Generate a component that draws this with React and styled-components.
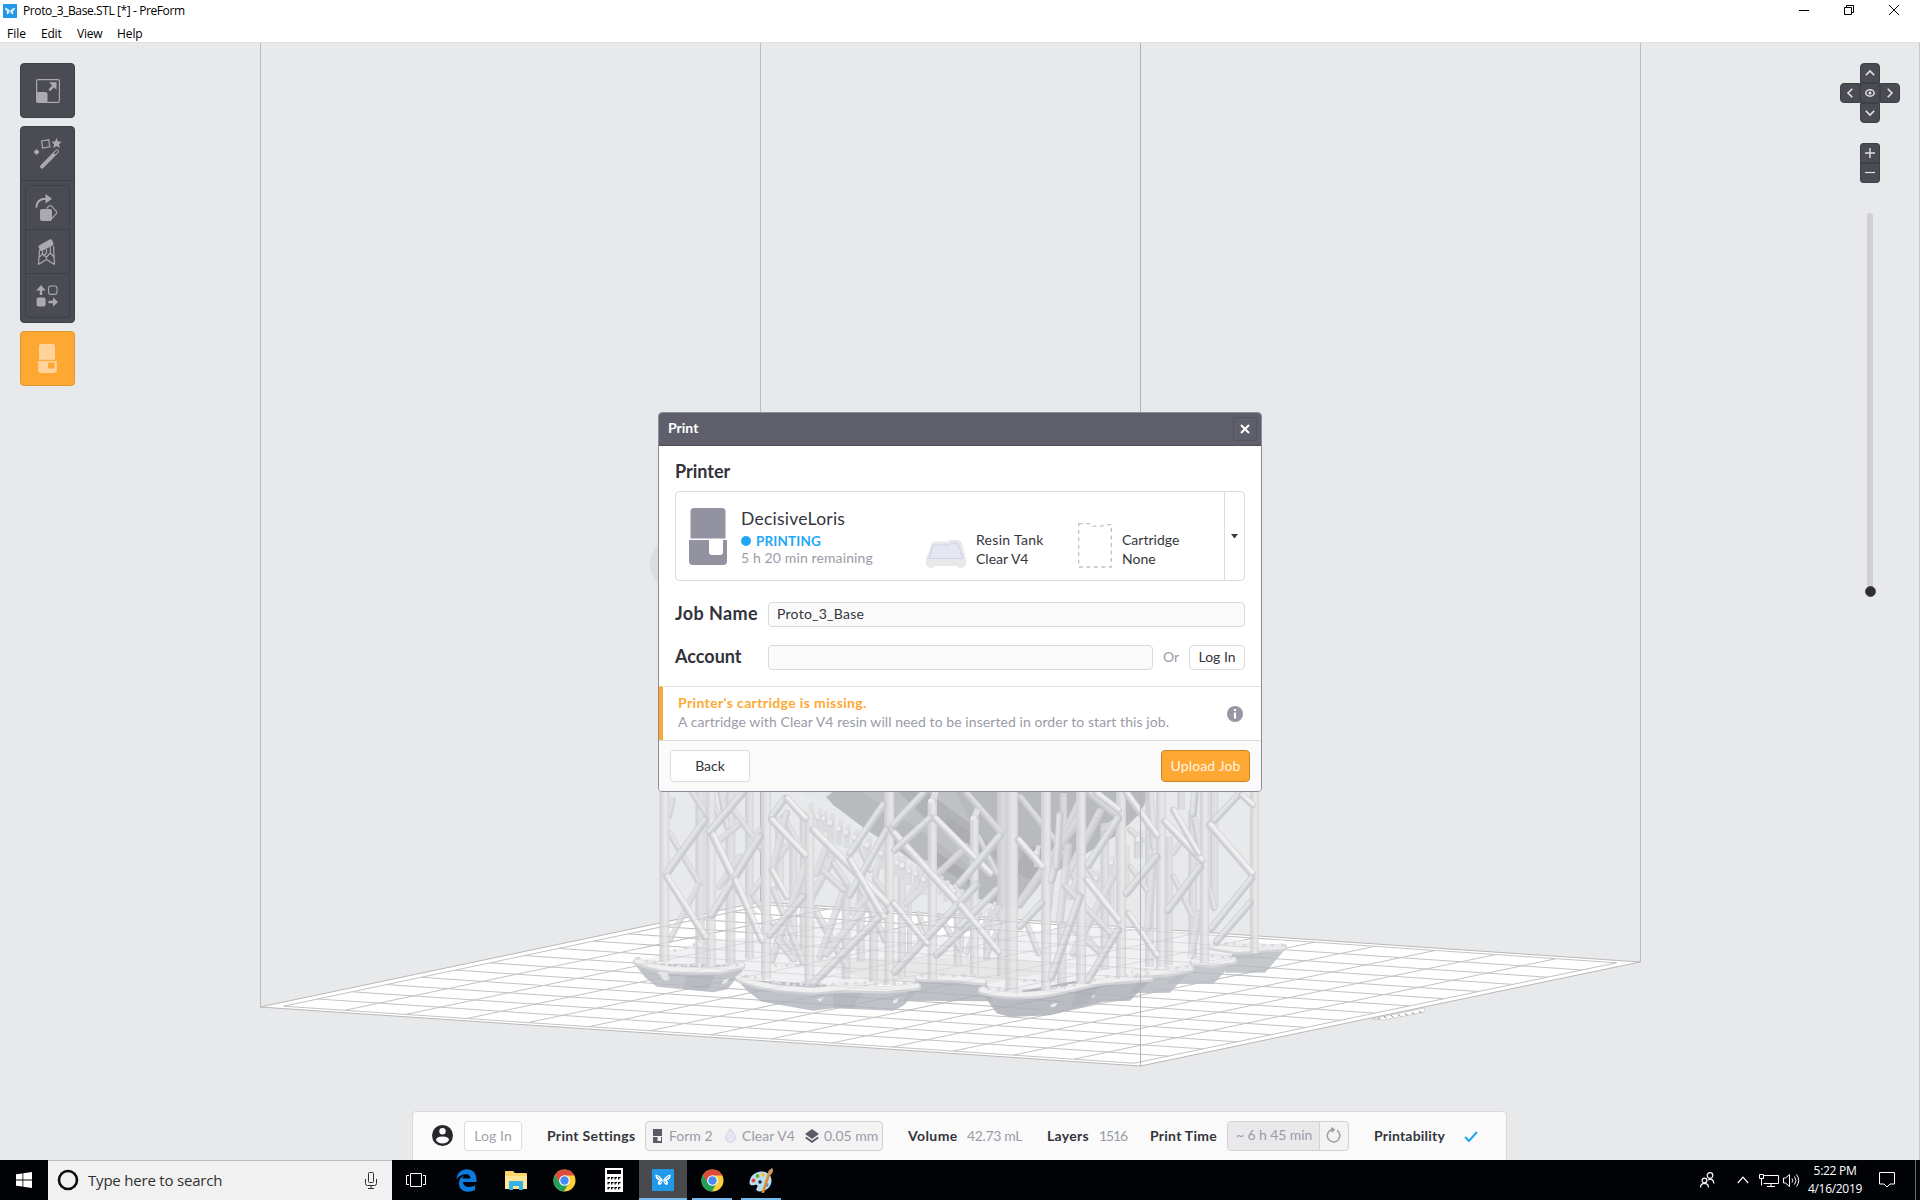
import React from "react";
import styled, { createGlobalStyle, css } from "styled-components";

const Global = createGlobalStyle`
  * { box-sizing: border-box; }
  html, body { margin: 0; padding: 0; overflow: hidden; }
  svg { display: block; flex: none; }
  button { font: inherit; margin: 0; padding: 0; }
`;

const UI = `Lato, "Open Sans", sans-serif`;
const SYS = `"Open Sans", "Noto Sans", sans-serif`;

/* ---------- window frame ---------- */

const Screen = styled.div`
  width: 1920px;
  height: 1200px;
  display: grid;
  grid-template-rows: 22px 20px 1118px 40px;
  background: #fff;
  font-family: ${UI};
  font-size: 14px;
  color: #35353d;
`;
const TitleBar = styled.header`
  display: flex;
  align-items: center;
  padding: 0 21px 0 3px;
  color: #000;
  font: 12px/22px ${SYS};
`;
const Title = styled.span`
  margin-left: 6px;
  letter-spacing: ${(p) => p.$ls || 0}px;
  flex: 1;
`;
const WinControls = styled.div`
  display: flex;
  gap: 35px;
  margin-top: -2px;
`;
const MenuBar = styled.nav`
  display: flex;
  padding-left: 7px;
  color: #000;
  font: 12px/23px ${SYS};
`;
const MenuItem = styled.span`
  width: ${(p) => p.$w}px;
  letter-spacing: ${(p) => p.$ls || 0}px;
`;
const Viewport = styled.main`
  position: relative;
  background: #e8e9eb;
  border-top: 1px solid #dfe0e2;
  border-right: 1px solid #c9cacc;
  overflow: hidden;
`;
const SceneSvg = styled.svg`
  position: absolute;
  left: 0;
  top: -43px;
`;

/* ---------- side tools ---------- */

const ToolColumn = styled.aside`
  position: absolute;
  left: 20px;
  top: 20px;
  display: flex;
  flex-direction: column;
  gap: 8px;
`;
const Tool = styled.button`
  width: 55px;
  height: 55px;
  border-radius: 4px;
  border: 1px solid ${(p) => (p.$hot ? "#e0952f" : "#3f3f48")};
  background: ${(p) => (p.$hot ? "#fea834" : "#4b4b54")};
  display: grid;
  place-items: center;
`;
const ToolGroup = styled.div`
  width: 55px;
  height: 197px;
  border-radius: 4px;
  border: 1px solid #3f3f48;
  background: #4b4b54;
`;
const GroupHead = styled.div`
  height: 54px;
  border-bottom: 1px solid #3e3e47;
  display: grid;
  place-items: center;
`;
const SubTools = styled.div`
  margin: 4px 4px 0;
  height: 133px;
  border: 1px solid #3f3f48;
  border-radius: 4px;
  display: grid;
  grid-template-rows: 44px 44px 43px;
`;
const SubTool = styled.div`
  display: grid;
  place-items: center;
  padding-right: 2px;
  border-bottom: ${(p) => (p.$last ? "none" : "1px solid #3f3f48")};
`;

/* ---------- view controls ---------- */

const ViewColumn = styled.aside`
  position: absolute;
  right: 19px;
  top: 20px;
  width: 60px;
  display: flex;
  flex-direction: column;
  align-items: center;
`;
const Pad = styled.div`
  display: grid;
  grid-template-columns: repeat(3, 20px);
  grid-template-rows: repeat(3, 20px);
`;
const PadKey = styled.div`
  grid-area: ${(p) => p.$area};
  background: #4b4b54;
  border: 1px solid #3f3f48;
  border-radius: ${(p) => p.$r || "0"};
  display: grid;
  place-items: center;
`;
const ZoomKeys = styled.div`
  margin-top: 20px;
  width: 20px;
  height: 40px;
  border-radius: 3px;
  border: 1px solid #3f3f48;
  background: linear-gradient(#4b4b54 18px, #3f3f48 18px, #3f3f48 20px, #4b4b54 20px);
  display: grid;
  grid-template-rows: 18px 20px;
  place-items: center;
`;
const SliderTrack = styled.div`
  margin-top: 30px;
  width: 6px;
  height: 384px;
  border-radius: 3px;
  background: #d0d0d2;
  display: flex;
  align-items: flex-end;
  justify-content: center;
`;
const Knob = styled.div`
  flex: none;
  width: 11px;
  height: 11px;
  border-radius: 50%;
  background: #2c2c31;
  border: 1px solid #4b4b54;
`;

/* ---------- dialog ---------- */

const Dialog = styled.section`
  position: absolute;
  left: 658px;
  top: 369px;
  width: 604px;
  height: 380px;
  border: 1px solid #8d8d99;
  border-radius: 4px;
  background: #fff;
  overflow: hidden;
  display: flex;
  flex-direction: column;
`;
const DialogHead = styled.div`
  height: 33px;
  flex: none;
  background: #5f5f6b;
  border-bottom: 1px solid #50505c;
  color: #fff;
  font-weight: 700;
  font-size: 14px;
  display: flex;
  align-items: center;
  justify-content: space-between;
  padding: 0 4px 3px 9px;
`;
const CloseBtn = styled.div`
  width: 24px;
  height: 24px;
  margin-top: 2px;
  border: 1px solid #53535f;
  border-radius: 3px;
  display: grid;
  place-items: center;
`;
const Body = styled.div`
  height: 240px;
  padding: 0 16px;
  display: flex;
  flex-direction: column;
`;
const Heading = styled.div`
  font-size: 18px;
  font-weight: 700;
  line-height: 24px;
  color: #32323a;
  white-space: nowrap;
  letter-spacing: ${(p) => p.$ls || 0}px;
  width: ${(p) => (p.$w ? p.$w + "px" : "auto")};
  margin-top: ${(p) => p.$mt || 0}px;
`;
const PrinterCard = styled.div`
  margin-top: 8px;
  height: 90px;
  flex: none;
  border: 1px solid #dcdcde;
  border-radius: 4px;
  display: flex;
`;
const PrinterInfo = styled.div`
  width: 186px;
  padding: 15px 0 0 14px;
`;
const PrinterName = styled.div`
  font-size: 17.5px;
  line-height: 24px;
  letter-spacing: ${(p) => p.$ls || 0}px;
`;
const State = styled.div`
  display: flex;
  align-items: center;
  gap: 5px;
  height: 20px;
  color: #22a7f5;
  font-weight: 700;
  font-size: 13.5px;
  letter-spacing: 0.15px;
  &::before {
    content: "";
    width: 10px;
    height: 10px;
    border-radius: 50%;
    background: #22a7f5;
  }
`;
const Muted = styled.div`
  color: #9b9ba7;
  white-space: nowrap;
  font-size: 14px;
  line-height: ${(p) => p.$lh || 16}px;
  letter-spacing: ${(p) => p.$ls || 0}px;
`;
const Part = styled.div`
  width: ${(p) => p.$w}px;
  padding-top: ${(p) => p.$pt}px;
`;
const PartText = styled.div`
  width: ${(p) => p.$w}px;
  padding-top: 38px;
  line-height: 19px;
  font-size: 14px;
  white-space: nowrap;
`;
const Line = styled.div`
  letter-spacing: ${(p) => p.$ls || 0}px;
`;
const Drop = styled.div`
  margin-left: auto;
  width: 20px;
  border-left: 1px solid #dcdcde;
  display: grid;
  place-items: center;
`;
const Row = styled.div`
  display: flex;
  align-items: center;
  height: 24px;
  margin-top: ${(p) => p.$mt}px;
`;
const Field = styled.div`
  width: ${(p) => p.$w}px;
  height: 25px;
  border: 1px solid #dadadc;
  border-radius: 4px;
  background: #fafafa;
  padding-left: 8px;
  line-height: 22px;
  letter-spacing: ${(p) => p.$ls || 0}px;
`;
const Or = styled.span`
  width: 36px;
  text-align: center;
  color: #9b9ba7;
  margin-top: -2px;
`;
const Button = styled.div`
  width: ${(p) => p.$w}px;
  height: ${(p) => p.$h}px;
  border-radius: 4px;
  border: 1px solid #dcdcde;
  background: #fff;
  display: grid;
  place-items: center;
  padding-bottom: 2px;
  white-space: nowrap;
  letter-spacing: ${(p) => p.$ls || 0}px;
  ${(p) => p.$muted && css`color: #a3a3ad;`}
  ${(p) =>
    p.$primary &&
    css`
      background: #fea834;
      border-color: #c98427;
      color: #fff3e0;
    `}
`;
const Warning = styled.div`
  height: 54px;
  flex: none;
  border-top: 1px solid #e3e3e5;
  border-left: 4px solid #fea834;
  padding: 0 18px 0 15px;
  display: flex;
  align-items: center;
  justify-content: space-between;
`;
const WarnText = styled.div`
  padding-bottom: 3px;
`;
const WarnTitle = styled.div`
  color: #fea834;
  font-weight: 700;
  line-height: 19px;
  letter-spacing: ${(p) => p.$ls || 0}px;
`;
const Foot = styled.div`
  flex: 1;
  background: #fafafa;
  border-top: 1px solid #dadadc;
  display: flex;
  align-items: center;
  justify-content: space-between;
  padding: 0 11px;
`;

/* ---------- status bar ---------- */

const Status = styled.div`
  position: absolute;
  left: 412px;
  bottom: 0;
  width: 1095px;
  height: 49px;
  border: 1px solid #dadadc;
  border-bottom: 0;
  border-radius: 4px 4px 0 0;
  background: #fafafa;
  display: flex;
  align-items: center;
  padding-left: 19px;
`;
const Cell = styled.span`
  width: ${(p) => p.$w}px;
  flex: none;
  white-space: nowrap;
  margin-top: -2px;
  font-weight: ${(p) => (p.$b ? 700 : 400)};
  color: ${(p) => (p.$b ? "#35353d" : "#9b9ba7")};
  letter-spacing: ${(p) => p.$ls || 0}px;
`;
const Group = styled.div`
  width: ${(p) => p.$w}px;
  margin-right: ${(p) => p.$mr}px;
  height: 30px;
  flex: none;
  border: 1px solid #d2d2d4;
  border-radius: 4px;
  background: #f3f3f4;
  display: flex;
  align-items: center;
  padding-left: ${(p) => p.$pl || 0}px;
  overflow: hidden;
`;
const Glyph = styled.div`
  width: ${(p) => p.$w}px;
  flex: none;
  margin-top: -1px;
`;
const TimeCell = styled.div`
  width: 93px;
  height: 28px;
  line-height: 26px;
  padding-left: 8px;
  background: #e9e9eb;
  border-right: 1px solid #d2d2d4;
  color: #9b9ba7;
  white-space: nowrap;
  letter-spacing: ${(p) => p.$ls || 0}px;
`;

/* ---------- taskbar ---------- */

const Taskbar = styled.footer`
  background: #010307;
  display: flex;
  font-family: ${SYS};
  color: #fff;
`;
const Start = styled.div`
  width: 48px;
  display: grid;
  place-items: center;
`;
const Search = styled.div`
  width: 344px;
  background: #f1f1f1;
  border-top: 1px solid #bdbdbd;
  display: flex;
  align-items: center;
  padding: 0 15px 1px 9px;
  color: #303030;
  font-size: 15px;
`;
const SearchText = styled.span`
  margin: -1px 0 0 9px;
  flex: 1;
  letter-spacing: ${(p) => p.$ls || 0}px;
`;
const TaskApp = styled.div`
  width: ${(p) => p.$w || 49}px;
  display: grid;
  place-items: center;
  background: ${(p) => (p.$active ? "#47494d" : "none")};
  box-shadow: ${(p) => (p.$active ? "inset 0 -2px #76b9ed" : "none")};
`;
const Running = styled.div`
  width: 40px;
  height: 40px;
  margin: 0 4px 0 5px;
  display: grid;
  place-items: center;
  box-shadow: inset 0 -2px #76b9ed;
`;
const Tray = styled.div`
  margin-left: auto;
  display: flex;
  align-items: center;
  border-right: 1px solid #6c6d70;
  margin-right: 4px;
  padding-right: 20px;
`;
const Clock = styled.div`
  width: 62px;
  margin: -1px 13px 0 3px;
  text-align: center;
  font-size: 12px;
  line-height: 18px;
  letter-spacing: ${(p) => p.$ls || 0}px;
`;

/* ---------- 3D scene ---------- */

const quad = [[260, 1007], [1140.5, 1066], [1640, 962], [760, 902]];
const project = (() => {
  const [[x0, y0], [x1, y1], [x2, y2], [x3, y3]] = quad;
  const dx1 = x1 - x2, dx2 = x3 - x2, sx = x0 - x1 + x2 - x3;
  const dy1 = y1 - y2, dy2 = y3 - y2, sy = y0 - y1 + y2 - y3;
  const d = dx1 * dy2 - dx2 * dy1;
  const g = (sx * dy2 - dx2 * sy) / d;
  const h = (dx1 * sy - sx * dy1) / d;
  const a = x1 - x0 + g * x1, b = x3 - x0 + h * x3;
  const e = y1 - y0 + g * y1, f = y3 - y0 + h * y3;
  return (u, v) => {
    const w = g * u + h * v + 1;
    return [(a * u + b * v + x0) / w, (e * u + f * v + y0) / w];
  };
})();

const INSET = 0.017;
const cells = 14;
const seg = (u1, v1, u2, v2) => {
  const [a, b] = project(u1, v1);
  const [c, d] = project(u2, v2);
  return `M${a.toFixed(1)} ${b.toFixed(1)}L${c.toFixed(1)} ${d.toFixed(1)}`;
};
const gridPath = Array.from({ length: cells + 1 }, (_, i) => {
  const t = INSET + ((1 - 2 * INSET) * i) / cells;
  return seg(t, INSET, t, 1 - INSET) + seg(INSET, t, 1 - INSET, t);
}).join("");

/* scene model, in thirds of a pixel from (620, 780); the right half is shifted by 1020 */
const R = (list) => list.map(([a, b, c, d, w]) => [a + 1020, b, c + 1020, d, w]);

const backPosts = [
  [240, 30, 240, 555, 28], [331, 30, 331, 548, 30], [388, 30, 388, 535, 26], [520, 190, 520, 545, 24],
  [478, 110, 478, 330, 26], [550, 110, 550, 560, 22],
  [678, 320, 678, 598, 26], [722, 300, 722, 545, 24], [760, 400, 760, 605, 26], [845, 270, 845, 590, 24],
  [1013, 400, 1013, 555, 24], [900, 400, 900, 500, 14], [868, 360, 868, 540, 14], [632, 130, 632, 260, 22],
  ...R([
    [80, 410, 80, 540, 20], [125, 30, 125, 590, 28], [305, 430, 305, 615, 28],
    [434, 130, 434, 568, 26], [455, 250, 455, 400, 16], [568, 30, 568, 560, 26], [627, 170, 627, 555, 22],
    [698, 90, 698, 525, 26], [762, 30, 762, 385, 26], [663, 30, 663, 90, 22], [535, 170, 535, 235, 26],
    [310, 40, 310, 180, 22], [5, 330, 5, 520, 14], [100, 380, 100, 450, 18], [475, 160, 475, 240, 18],
    [500, 200, 500, 320, 16],
  ]),
];
const backStruts = [
  [215, 37, 260, 105, 18], [148, 160, 238, 310, 18], [235, 315, 150, 480, 18], [375, 120, 295, 185, 20],
  [500, 200, 395, 340, 20], [340, 90, 425, 210, 18], [460, 330, 550, 550, 20], [400, 350, 510, 500, 18],
  [330, 300, 400, 400, 16], [298, 320, 360, 230, 20], [300, 30, 320, 140, 18], [270, 60, 298, 110, 16],
  [420, 150, 340, 300, 22], [490, 110, 550, 220, 18], [560, 250, 455, 540, 24], [585, 390, 680, 560, 22],
  [635, 240, 550, 400, 24], [675, 320, 600, 530, 22], [605, 270, 670, 330, 20], [640, 250, 680, 310, 20],
  [720, 320, 795, 480, 22], [790, 200, 765, 290, 20], [700, 400, 760, 330, 22], [730, 390, 620, 520, 24],
  [765, 300, 920, 490, 18], [750, 270, 720, 200, 18], [920, 250, 860, 370, 20], [1040, 200, 860, 370, 20],
  [895, 400, 925, 470, 16], [960, 410, 1020, 510, 18], [470, 480, 520, 540, 16], [500, 100, 460, 260, 22],
  [160, 60, 148, 110, 16], [620, 200, 590, 280, 22],
  ...R([
    [20, 40, 125, 160, 20], [55, 170, 110, 280, 16], [180, 50, 300, 200, 18], [305, 215, 365, 340, 20],
    [365, 50, 300, 190, 20], [360, 110, 180, 370, 26], [420, 95, 315, 300, 24], [325, 200, 300, 420, 24],
    [275, 300, 255, 480, 20], [370, 250, 330, 350, 20], [470, 270, 340, 520, 24], [315, 320, 470, 480, 20],
    [380, 470, 420, 520, 20], [390, 40, 475, 110, 22], [380, 260, 410, 300, 20], [510, 150, 545, 180, 18],
    [580, 230, 565, 440, 24], [510, 260, 560, 330, 16], [640, 290, 695, 405, 18], [680, 160, 640, 220, 18],
    [715, 400, 695, 525, 24], [570, 30, 580, 200, 22], [750, 330, 762, 385, 18], [70, 440, 120, 380, 18],
    [200, 430, 235, 520, 18], [120, 430, 80, 530, 16], [330, 440, 410, 510, 18], [700, 100, 725, 240, 20],
    [470, 120, 430, 150, 18], [60, 400, 20, 520, 14],
  ]),
];
const posts = [
  [133, 30, 133, 545, 30], [272, 30, 272, 560, 30], [438, 30, 438, 595, 30], [568, 95, 568, 612, 30],
  [808, 30, 808, 615, 30], [937, 70, 937, 598, 28],
  ...R([
    [43, 120, 43, 585, 26],
    [155, 30, 155, 632, 38], [258, 30, 258, 630, 30], [363, 30, 363, 607, 30], [483, 30, 483, 590, 30],
    [603, 30, 603, 560, 30], [733, 30, 733, 548, 28], [883, 30, 883, 520, 26],
  ]),
];
const struts = [
  [370, 37, 270, 155, 24], [255, 120, 140, 280, 24], [140, 290, 255, 470, 22], [278, 165, 345, 305, 24],
  [420, 170, 275, 405, 24], [345, 300, 425, 480, 22], [455, 110, 495, 55, 22], [500, 55, 555, 115, 22],
  [455, 120, 555, 225, 22], [455, 270, 500, 350, 20], [550, 350, 450, 465, 22], [580, 150, 800, 370, 24],
  [690, 220, 790, 75, 22], [800, 150, 690, 345, 22], [820, 135, 910, 40, 22], [822, 160, 1050, 410, 24],
  [930, 115, 825, 210, 22], [945, 115, 1110, 280, 22], [1070, 315, 825, 575, 24], [795, 395, 580, 610, 24],
  [690, 240, 790, 410, 22], [820, 370, 920, 490, 20], [1050, 430, 950, 525, 22],
  ...R([
    [120, 168, 0, 310, 24], [110, 330, 0, 440, 22], [0, 375, 115, 515, 22],
    [175, 180, 245, 260, 22], [298, 205, 275, 300, 24], [300, 105, 290, 260, 22], [245, 370, 180, 440, 22],
    [360, 350, 275, 590, 24], [475, 115, 385, 255, 24], [380, 300, 475, 420, 22], [475, 450, 385, 600, 22],
    [500, 40, 590, 165, 22], [590, 230, 500, 340, 24], [505, 400, 590, 525, 20], [615, 125, 725, 240, 24],
    [640, 90, 715, 220, 20], [720, 260, 625, 390, 24], [840, 40, 765, 120, 22], [845, 45, 878, 75, 20],
    [750, 135, 875, 280, 24], [875, 295, 755, 445, 22], [870, 370, 770, 485, 22], [705, 40, 700, 100, 22],
    [410, 40, 475, 90, 22],
  ]),
];
const beads = [
  [568, 100, 13], [595, 112, 11], [612, 118, 10], [632, 130, 12], [657, 148, 12], [680, 160, 11], [705, 175, 11],
  [743, 197, 12], [785, 222, 11], [832, 250, 10], [848, 258, 12], [868, 275, 10], [888, 283, 10], [912, 300, 11],
  [960, 310, 9], [978, 325, 10], [1003, 335, 10], [1022, 350, 9], [1042, 358, 9], [937, 68, 14],
  [1063, 118, 13], [1100, 405, 9], [1120, 385, 8], [1250, 220, 10], [1430, 295, 10], [1475, 250, 10], [1557, 180, 12],
];

const Strut = ({ s: [x1, y1, x2, y2, w], dim, post }) => {
  const len = Math.hypot(x2 - x1, y2 - y1) || 1;
  let nx = (y2 - y1) / len, ny = -(x2 - x1) / len;
  if (ny > 0 || (ny === 0 && nx > 0)) { nx = -nx; ny = -ny; }
  const o = post ? -w * 0.1 : w * 0.14;
  const falling = (x2 - x1) * (y2 - y1) > 0;
  const tones = dim
    ? falling ? ["#cbcdd0", "#d8d9db", "#e4e4e6"] : ["#cfd0d3", "#d9dadc", "#e0e0e2"]
    : post ? ["#d3d5d8", "#dedfe1", "#e7e7e8"]
    : falling ? ["#cccdd1", "#dfe0e2", "#f2f2f3"] : ["#c8cacd", "#d7d8db", "#e3e4e5"];
  const cap = post ? "butt" : "round";
  return (
    <g strokeLinecap={cap} fill="none">
      <path d={`M${x1} ${y1}L${x2} ${y2}`} stroke={tones[0]} strokeWidth={w} />
      <path d={`M${x1 + nx * o} ${y1 + ny * o}L${x2 + nx * o} ${y2 + ny * o}`} stroke={tones[1]} strokeWidth={w * 0.68} />
      <path d={`M${x1 + nx * o * 1.3} ${y1 + ny * o * 1.3}L${x2 + nx * o * 1.3} ${y2 + ny * o * 1.3}`} stroke={tones[2]} strokeWidth={w * 0.34} />
    </g>
  );
};

const sides = [
  ["M42 550L75 592L110 620L280 637L322 628L368 572L350 555Z", "#b9bcc2"],
  ["M348 598L385 635L425 665L580 692L640 685L820 692L852 676L900 622L640 615Z", "#b7bac1"],
  ["M850 662L1120 664L1095 600L890 596Z", "#b4b7bd"],
  ["M1815 578L1935 578L1996 508L1840 512Z", "#bdc0c4"],
  ["M1640 612L1780 612L1845 542L1700 560Z", "#bcbfc4"],
  ["M1530 640L1650 638L1714 568L1560 590Z", "#b9bcc1"],
  ["M1080 630L1130 700L1170 711L1290 706L1450 665L1530 662L1596 596L1380 600L1160 640Z", "#b0b3b9"],
];
const rims = [
  "M50 545C90 560 150 572 200 572L300 572L365 558",
  "M355 596C400 610 440 625 500 628L580 634L660 626L800 630L892 620",
  "M895 594L1000 596L1090 606",
  "M1085 632C1120 645 1160 650 1240 645C1330 640 1380 612 1450 605L1590 594",
  "M1545 580C1600 585 1660 578 1712 566",
  "M1720 548L1780 552L1840 542",
  "M1775 500L1850 512L1990 502",
];
const knobs = (() => {
  const out = [];
  const run = (x1, y1, x2, y2, n) => {
    for (let i = 0; i < n; i++) {
      const t = i / (n - 1);
      out.push([x1 + (x2 - x1) * t + ((i * 5) % 4), y1 + (y2 - y1) * t + ((i * 7) % 5) - 2]);
    }
  };
  run(52, 536, 130, 552, 7); run(140, 556, 350, 556, 14); run(150, 515, 250, 488, 8);
  run(362, 586, 470, 606, 9); run(480, 610, 640, 614, 9); run(660, 610, 880, 610, 16);
  run(890, 586, 1060, 586, 12); run(1090, 625, 1200, 634, 9); run(1180, 600, 1260, 600, 6);
  run(1300, 626, 1440, 598, 10); run(1460, 592, 1580, 580, 9); run(1560, 570, 1700, 558, 10);
  run(1710, 530, 1830, 530, 10); run(1770, 490, 1985, 498, 16); run(450, 555, 560, 560, 8);
  return out;
})();

const Scene = () => (
  <SceneSvg width="1920" height="1200" viewBox="0 0 1920 1200">
    <polygon points={quad.map((p) => p.join(",")).join(" ")} fill="#fff" stroke="#b8b8ba" strokeWidth="1" />
    <path d="M1372 1019L1425 1008L1424 1012L1384 1020Z" fill="#fff" stroke="#c4c4c6" strokeWidth=".7" />
    <path d="M1378 1018l2 1.5m4-3l3 2m4-3l3 2m4-3l3 2m4-3l3 2m4-3l3 2m4-3l3 1.5" stroke="#77777b" strokeWidth="1" strokeDasharray="2 1" />
    <path d={gridPath} fill="none" stroke="#c3c3c5" strokeWidth="1" />
    <path d="M260.5 43V1007M760.5 43V902M1640.5 43V962" stroke="#bcbcbf" fill="none" />
    <circle cx="678" cy="564" r="28" fill="#dcdddf" />
    <g transform="translate(620 780) scale(.33333)">
      <path d="M590 20L640 75L740 150L840 215L900 260L980 305L1060 350L1150 385L1205 385L1270 300L1400 220L1500 160L1560 100L1600 20Z" fill="#b9babd" />
      <path d="M700 20L900 150L1050 260L1150 280L1060 150L1000 20Z" fill="#c0c1c4" />
      <path d="M820 20L900 20L1050 130L1150 240L1060 210L920 120Z" fill="#b2b3b7" />
      <path d="M980 110L1060 160L1040 190L970 150ZM940 210L1080 300L1060 320L920 240Z" fill="#acadb1" />
      <path d="M1180 270C1220 300 1260 310 1290 285L1300 200L1220 200Z" fill="#b0b1b5" />
      <circle cx="590" cy="-2" r="60" fill="#e4e6e9" />
      <path d="M150 520L250 485L420 470L560 420L700 430L1000 470L1400 440L1750 460L1990 500L1830 545L1600 590L1450 605L1240 640L1080 625L890 600L640 625L360 590L50 545Z" fill="#eeedef" opacity=".82" />
      <path d="M560 540L1140 530L1380 560L1100 612L760 605Z" fill="#e4e2e2" opacity=".7" />
      <g opacity=".86">
        {backPosts.map((s, i) => <Strut key={i} s={s} dim post />)}
        {backStruts.map((s, i) => <Strut key={i} s={s} dim />)}
      </g>
      {beads.map(([x, y, r], i) => (
        <g key={i}>
          <path d={`M${x - r * 0.8} ${y}L${x + r * 0.1} ${y - r * 2.6}L${x + r * 1.3} ${y - r * 2.2}L${x + r * 0.8} ${y}Z`} fill="#dfe0e2" />
          <rect x={x - r * 0.8} y={y} width={r * 1.6} height={r * 4} fill="#dbdcde" />
          <circle cx={x} cy={y} r={r} fill="#d4d5d8" />
          <circle cx={x - r * 0.2} cy={y - r * 0.25} r={r * 0.65} fill="#ececee" />
        </g>
      ))}
      {sides.map(([d, f], i) => <path key={i} d={d} fill={f} opacity=".88" />)}
      <path d="M110 580L150 600L140 570M310 600l18-6-8 14-14 4zM590 658l22-6-12 14zM820 660l18-6-8 14-10 2zM1295 672l18-4-8 12-14 2zM1412 650l14-8-6 12zM120 588l16 4 10 10-14-2z" fill="#e9eaec" />
      <path d="M640 632L730 632L700 685L640 682ZM1380 615L1450 608L1400 672L1350 684ZM200 580L290 578L260 632L190 628Z" fill="#a9acb4" opacity=".35" />
      {rims.map((d, i) => (
        <g key={i} fill="none" strokeLinecap="round">
          <path d={d} stroke="#d4d5d9" strokeWidth="23" />
          <path d={d} stroke="#f0f0f1" strokeWidth="14" transform="translate(0 -3)" />
        </g>
      ))}
      {knobs.map(([x, y], i) => (
        <rect key={i} x={x - 5} y={y - 4} width={i % 3 ? 10 : 14} height="9" rx="2" fill={i % 2 ? "#ebebec" : "#dadbde"} />
      ))}
      <g opacity=".96">
        {posts.map((s, i) => <Strut key={i} s={s} post />)}
        {struts.map((s, i) => <Strut key={i} s={s} />)}
      </g>
    </g>
    <clipPath id="model"><path d="M640 905H1270V985L1150 975L1010 1015L760 1008L640 970Z" /></clipPath>
    <path d={gridPath} fill="none" stroke="#9fa1a6" strokeWidth="1" opacity=".16" clipPath="url(#model)" />
    <path d="M1140.5 43V1066" stroke="#b4b4b7" />
  </SceneSvg>
);

/* ---------- icons ---------- */

const G = "#a9a9af";
const Butterfly = ({ size }) => (
  <svg width={size} height={size} viewBox="0 0 22 22">
    <rect width="22" height="22" fill="#2199e8" />
    <path d="M10.600 10.500C8.500 7.500 6 5.800 3.300 5.700c.2 3.400 1.700 5.100 4 5.600-1.500 1-1.600 3-.6 4.800 2-.3 3.400-1.800 3.900-4.200zM11.400 10.500C13.500 7.500 16 5.800 18.700 5.700c-.2 3.400-1.700 5.100-4 5.600 1.500 1 1.600 3 .6 4.800-2-.3-3.400-1.800-3.900-4.200z" fill="#fff" />
    <path d="M5 7.200l3.500 3M17 7.200l-3.500 3M8 14l1.600-2M14 14l-1.600-2" stroke="#2199e8" strokeWidth=".9" />
  </svg>
);
const ScaleIcon = () => (
  <svg width="24" height="24" viewBox="0 0 24 24" fill={G}>
    <rect x=".6" y=".6" width="22.800" height="22.800" rx="1.500" fill="none" stroke={G} strokeWidth="1.200" />
    <rect x=".5" y="13" width="11" height="10.500" rx="2" />
    <path d="M13 3.200h7.500v7.600l-2.500-2.600-3.800 4-1.800-1.800 3.800-4z" />
  </svg>
);
const WandIcon = () => (
  <svg width="29" height="32" viewBox="0 0 29 32" fill={G}>
    <path d="M3.500 11l3 3-3 3-3-3zM23.500 0l1.500 3.500 3.700.3-2.800 2.500.9 3.700-3.300-2-3.200 2 .8-3.700L18.300 3.800l3.700-.3z" />
    <path d="M8.500 3l7.200-1.200 1.100 7L9.700 10z" fill="none" stroke={G} strokeWidth="1.200" />
    <path d="M9 28.700L24 13.300" stroke={G} strokeWidth="3.800" strokeLinecap="round" />
    <path d="M22 15.300L24 13.300" stroke="#4b4b54" strokeWidth="1.800" strokeLinecap="round" />
  </svg>
);
const RotateIcon = () => (
  <svg width="23" height="28" viewBox="0 0 23 28" fill={G}>
    <path d="M1.300 13.500C1.500 7.500 5 4.700 11 4.700" fill="none" stroke={G} strokeWidth="2" />
    <path d="M10.500 0l6.500 4.700-6.500 4.800z" />
    <rect x="5" y="15" width="12" height="12" rx="2" />
    <path d="M11.500 14.500l3-2.800q1-.5 2 .4l5 5.500q.6.900 0 1.800l-4.500 5.300" fill="none" stroke={G} strokeWidth="1.100" />
  </svg>
);
const SupportIcon = () => (
  <svg width="19" height="26" viewBox="0 0 19 26" fill={G}>
    <path d="M2 6.500L12.500.5q1.800-.8 2.600.8l1.400 3.200q.3 1.200-.8 1.900L5.500 11.700q-2 .8-2.800-.7l-1-2.500q-.4-1.400.3-2z" />
    <path d="M2.500 11L1.500 25.500M16.500 7l1 18.500M1.500 25.500L9.500 20.500l8 5M5.500 12v3l-3 3M5.500 15l4 3M9.500 10v4l-3 3M13.300 8v6l-3.800 4v2.500M13.300 14l3.700 4" fill="none" stroke={G} strokeWidth="1.200" />
  </svg>
);
const LayoutIcon = () => (
  <svg width="22" height="22" viewBox="0 0 22 22" fill={G}>
    <path d="M5 0l4.800 5.500H6.200V10H3.800V5.500H.2zM22 17l-5-4.800v3.600h-4.500v2.400H17v3.600z" />
    <rect x="12.600" y="1" width="8.400" height="8.400" rx="2.200" fill="none" stroke={G} strokeWidth="1.100" />
    <rect x=".6" y="12.600" width="9" height="9" rx="2" />
  </svg>
);
const PrintIcon = () => (
  <svg width="19" height="29" viewBox="0 0 19 29" fill="#ffd399">
    <path d="M3 0h12q2 0 2 2v13.800H1V2q0-2 2-2zM.2 17h18.600v9.500q0 2.500-2.500 2.500H2.700Q.2 29 .2 26.500z" />
    <rect x="10" y="18.500" width="6.500" height="6" rx="1" fill="#fea834" />
  </svg>
);
const Turned = styled.svg`
  transform: rotate(${(p) => p.$deg}deg);
`;
const Chevron = ({ r }) => (
  <Turned $deg={r} width="10" height="10" viewBox="0 0 10 10">
    <path d="M.8 7.300L5 3l4.200 4.300" fill="none" stroke="#e2e2e4" strokeWidth="1.600" />
  </Turned>
);
const PrinterPic = () => (
  <svg width="38" height="57" viewBox="0 0 38 57" fill="#9292a0">
    <path d="M5 0h28q3.500 0 3.500 3.500V30.500h-35V3.500Q1.500 0 5 0zM0 32h20v12q0 3 3 3h8q3 0 3-3V32h4v21q0 4-4 4H4q-4 0-4-4z" />
  </svg>
);
const TankPic = () => (
  <svg width="40" height="28" viewBox="0 0 40 28">
    <path d="M6 3L8 1.500H22L24 0h9l2.500 2L40 19v7h-2l-1 2h-4l-2-2H9l-2 2H3l-1-2H0v-7z" fill="#e8e8ea" />
    <path d="M7 5h16l2-2h6.500L37 18.500H3z" fill="#e6e6f1" stroke="#cfcfee" />
  </svg>
);
const CartridgePic = () => (
  <svg width="34" height="45" viewBox="0 0 34 45">
    <path d="M.7.700H13l2 2.500H24l2-1.500h7.300V44H.7z" fill="none" stroke="#c2c2c5" strokeWidth="1.300" strokeDasharray="4 3.500" />
  </svg>
);
const Chrome = () => (
  <svg width="23" height="23" viewBox="0 0 24 24">
    <circle cx="12" cy="12" r="11.500" fill="#fdcf3b" />
    <path d="M12 .5A11.500 11.500 0 0 0 2 6.300L7 15l5-8.200h10.300A11.500 11.500 0 0 0 12 .5z" fill="#de4b3c" />
    <path d="M2 6.300A11.500 11.500 0 0 0 11.300 23.500L16.500 14.500 7.300 14.600z" fill="#1fa05b" />
    <circle cx="12" cy="12" r="5.600" fill="#fff" />
    <circle cx="12" cy="12" r="4.400" fill="#4a8af4" />
  </svg>
);
const Edge = () => (
  <svg width="21" height="23" viewBox="0 0 21 23">
    <path d="M.3 10.200C1.200 4 5.300.3 10.800.3c6.200 0 9.700 4.600 9.700 10.200v2.400H7c.2 3.300 2.900 5 6.100 5 2.200 0 4.200-.6 6-1.600v4.700c-2 1.100-4.500 1.700-7.200 1.700-5.500 0-9-3.500-9-8.400 0-3.400 1.700-6.100 5-7.600C7 7.700 6.600 8.800 6.500 9.500h7.900c0-2.400-1.300-4.200-4.200-4.200-3.700 0-7.200 1.900-9.900 4.900z" fill="#0b7be0" />
  </svg>
);
const Folder = () => (
  <svg width="22" height="19" viewBox="0 0 22 19">
    <path d="M0 1q0-1 1-1h7l2 2h11q1 0 1 1v15H0z" fill="#fbd56b" />
    <path d="M0 5h22v13H0z" fill="#ffe597" />
    <path d="M4 11q0-1 1-1h12q1 0 1 1v8h-4v-4H8v4H4z" fill="#35b1e6" />
  </svg>
);
const Calc = () => (
  <svg width="18" height="24" viewBox="0 0 18 24">
    <rect width="18" height="24" fill="#fff" />
    <rect x="2" y="2" width="14" height="4" fill="#010307" />
    {[9, 14, 19].map((y) => [2.500, 6, 9.500, 13].map((x) => <path key={x + "-" + y} d={`M${x} ${y}h2.500v1.200h-1.300V${y + 2.500}h-1.200z`} fill="#010307" />))}
  </svg>
);
const Paint = () => (
  <svg width="25" height="25" viewBox="0 0 25 25">
    <path d="M.5 15C.5 8.500 6 3.500 12.500 3.500c6 0 10 4 10 9 0 7-6 11-12 11-3 0-4-2-2.500-4s-.5-3-2.500-2.500S.5 17.500.5 15z" fill="#b9def2" />
    <circle cx="4.500" cy="12.500" r="2" fill="#e0483a" /><circle cx="8.500" cy="8" r="2" fill="#68b32e" />
    <circle cx="14" cy="6.700" r="2" fill="#f3c42b" /><circle cx="17.500" cy="17" r="2" fill="#4c8fdc" />
    <circle cx="11" cy="14" r="1.700" fill="#15202a" />
    <path d="M14 24L20 6" stroke="#e08a2b" strokeWidth="2.600" strokeLinecap="round" />
    <path d="M18.500 6Q19 2 23 0q2 2 .5 4.500T20.500 8z" fill="#c99763" />
  </svg>
);

export default function App() {
  return (
    <Screen>
      <Global />
      <TitleBar>
        <Butterfly size={14} />
        <Title $ls={-0.4}>Proto_3_Base.STL [*] - PreForm</Title>
        <WinControls>
          <svg width="10" height="10"><path d="M0 5.500h10" stroke="#000" /></svg>
          <svg width="10" height="10" fill="none" stroke="#000"><path d="M.5 2.500h7v7h-7zM2.500 2V.5h7v7H8" /></svg>
          <svg width="10" height="10"><path d="M0 0l10 10M10 0L0 10" stroke="#000" /></svg>
        </WinControls>
      </TitleBar>
      <MenuBar>
        <MenuItem $w={34}>File</MenuItem>
        <MenuItem $w={36} $ls={-0.2}>Edit</MenuItem>
        <MenuItem $w={40} $ls={-0.2}>View</MenuItem>
        <MenuItem $w={40} $ls={-0.1}>Help</MenuItem>
      </MenuBar>

      <Viewport>
        <Scene />

        <ToolColumn>
          <Tool><ScaleIcon /></Tool>
          <ToolGroup>
            <GroupHead><WandIcon /></GroupHead>
            <SubTools>
              <SubTool><RotateIcon /></SubTool>
              <SubTool><SupportIcon /></SubTool>
              <SubTool $last><LayoutIcon /></SubTool>
            </SubTools>
          </ToolGroup>
          <Tool $hot><PrintIcon /></Tool>
        </ToolColumn>

        <ViewColumn>
          <Pad>
            <PadKey $area="1 / 2" $r="4px 4px 0 0"><Chevron r={0} /></PadKey>
            <PadKey $area="2 / 1" $r="4px 0 0 4px"><Chevron r={-90} /></PadKey>
            <PadKey $area="2 / 2">
              <svg width="10" height="8" viewBox="0 0 10 8"><ellipse cx="5" cy="4" rx="4.200" ry="3.200" fill="none" stroke="#e2e2e4" strokeWidth="1.500" /><circle cx="5" cy="4" r="1.500" fill="#e2e2e4" /></svg>
            </PadKey>
            <PadKey $area="2 / 3" $r="0 4px 4px 0"><Chevron r={90} /></PadKey>
            <PadKey $area="3 / 2" $r="0 0 4px 4px"><Chevron r={180} /></PadKey>
          </Pad>
          <ZoomKeys>
            <svg width="10" height="10"><path d="M0 5h10M5 0v10" stroke="#e2e2e4" strokeWidth="1.400" /></svg>
            <svg width="10" height="10"><path d="M0 5.500h10" stroke="#e2e2e4" strokeWidth="1.200" /></svg>
          </ZoomKeys>
          <SliderTrack><Knob /></SliderTrack>
        </ViewColumn>

        <Dialog>
          <DialogHead>
            Print
            <CloseBtn>
              <svg width="10" height="10"><path d="M1 1l8 8M9 1L1 9" stroke="#fff" strokeWidth="2" /></svg>
            </CloseBtn>
          </DialogHead>
          <Body>
            <Heading $mt={13}>Printer</Heading>
            <PrinterCard>
              <Glyph $w={51}><svg width="51" height="75"><g transform="translate(13 17)"><PrinterPic /></g></svg></Glyph>
              <PrinterInfo>
                <PrinterName $ls={0.25}>DecisiveLoris</PrinterName>
                <State>PRINTING</State>
                <Muted $lh={13} $ls={0.12}>5 h 20 min remaining</Muted>
              </PrinterInfo>
              <Part $w={63} $pt={48}><svg width="53" height="28"><g transform="translate(13 0)"><TankPic /></g></svg></Part>
              <PartText $w={102}><Line $ls={0.3}>Resin Tank</Line><Line>Clear V4</Line></PartText>
              <Part $w={44} $pt={31}><CartridgePic /></Part>
              <PartText $w={70}><Line>Cartridge</Line><Line>None</Line></PartText>
              <Drop><svg width="7" height="5"><path d="M0 0h7L3.500 4.500z" fill="#3a3a42" /></svg></Drop>
            </PrinterCard>
            <Row $mt={21}>
              <Heading $w={93} $mt={-3} $ls={0.4}>Job Name</Heading>
              <Field $w={477} $ls={0.25}>Proto_3_Base</Field>
            </Row>
            <Row $mt={19}>
              <Heading $w={93} $mt={-2}>Account</Heading>
              <Field $w={385} />
              <Or>Or</Or>
              <Button $w={56} $h={25}>Log In</Button>
            </Row>
          </Body>
          <Warning>
            <WarnText>
              <WarnTitle $ls={0.37}>Printer's cartridge is missing.</WarnTitle>
              <Muted $lh={19} $ls={0.07}>A cartridge with Clear V4 resin will need to be inserted in order to start this job.</Muted>
            </WarnText>
            <svg width="16" height="16"><circle cx="8" cy="8" r="8" fill="#9797a3" /><path d="M8 6.500V12.500M8 3v2" stroke="#fff" strokeWidth="2.200" /></svg>
          </Warning>
          <Foot>
            <Button $w={80} $h={32}>Back</Button>
            <Button $w={89} $h={32} $ls={0.15} $primary>Upload Job</Button>
          </Foot>
        </Dialog>

        <Status>
          <Glyph $w={32}>
            <svg width="21" height="21" viewBox="0 0 21 21"><circle cx="10.500" cy="10.500" r="10.500" fill="#26262c" /><circle cx="10.500" cy="6.300" r="3.200" fill="#fafafa" /><path d="M4 15.200q0-3.700 6.500-3.700t6.500 3.700q-2.500 3.200-6.500 3.200T4 15.200z" fill="#fafafa" /></svg>
          </Glyph>
          <Button $w={58} $h={30} $ls={0.1} $muted>Log In</Button>
          <Cell $w={25} />
          <Cell $w={98} $ls={0.3} $b>Print Settings</Cell>
          <Group $w={238} $mr={25} $pl={7}>
            <Glyph $w={16}><svg width="9" height="14"><path d="M0 0h9v7H0zM0 8h4.500v4H9v2H0zM8 8h1v5H8z" fill="#5b5b68" /></svg></Glyph>
            <Cell $w={56}>Form 2</Cell>
            <Glyph $w={17}><svg width="11" height="15" viewBox="0 0 11 15"><path d="M5.500.8C7.500 4 10.300 6.700 10.300 9.500a4.800 4.800 0 0 1-9.600 0C.7 6.700 3.500 4 5.500.8z" fill="#e6e6f3" stroke="#cfcfe0" /></svg></Glyph>
            <Cell $w={63} $ls={0.05}>Clear V4</Cell>
            <Glyph $w={19}><svg width="14" height="14" viewBox="0 0 14 14"><path d="M7 0l7 5-7 5-7-5zM1.500 7.800L7 11.700l5.500-3.900L14 9l-7 5-7-5z" fill="#5b5b68" /></svg></Glyph>
            <Cell $w={58}>0.05 mm</Cell>
          </Group>
          <Cell $w={59} $ls={0.4} $b>Volume</Cell>
          <Cell $w={80} $ls={-0.35}>42.73 mL</Cell>
          <Cell $w={52} $ls={0.3} $b>Layers</Cell>
          <Cell $w={51} $ls={-1.1}>1516</Cell>
          <Cell $w={77} $ls={0.25} $b>Print Time</Cell>
          <Group $w={122} $mr={25}>
            <TimeCell $ls={-0.1}>~ 6 h 45 min</TimeCell>
            <svg width="28" height="18" viewBox="0 0 28 18"><path d="M12 2.500a6.300 6.300 0 1 0 5 .8" fill="none" stroke="#9d9da3" strokeWidth="1.500" /><path d="M11 0l4.500 2.600L11.500 6z" fill="#9d9da3" /></svg>
          </Group>
          <Cell $w={90} $ls={0.2} $b>Printability</Cell>
          <svg width="14" height="11"><path d="M1 6l4 4L13 1" fill="none" stroke="#1fa4f5" strokeWidth="2" /></svg>
        </Status>
      </Viewport>

      <Taskbar>
        <Start><svg width="16" height="16"><path d="M0 2.300l6.500-.9v6.100H0zM7.300 1.300L16 0v7.500H7.300zM0 8.500h6.500v6.100L0 13.700zM7.300 8.500H16V16l-8.700-1.300z" fill="#fff" /></svg></Start>
        <Search>
          <svg width="22" height="22"><circle cx="11" cy="11" r="9" fill="none" stroke="#0d0d0d" strokeWidth="2.600" /></svg>
          <SearchText $ls={-0.2}>Type here to search</SearchText>
          <svg width="12" height="17" fill="none" stroke="#303030"><rect x="3.500" y=".5" width="5" height="10" rx="1" /><path d="M.5 7v4.500q0 2 2 2h7q2 0 2-2V7M6 13.500v3M3 16.500h6" /></svg>
        </Search>
        <TaskApp $w={48}><svg width="20" height="16" fill="none" stroke="#fff"><path d="M4.500 1.500h11v13h-11zM3 3.500H.5v9H3M17 3.500h2.500v9H17" /></svg></TaskApp>
        <TaskApp $w={52}><Edge /></TaskApp>
        <TaskApp $w={48}><Folder /></TaskApp>
        <TaskApp><Chrome /></TaskApp>
        <TaskApp $w={50}><Calc /></TaskApp>
        <TaskApp $w={48} $active><Butterfly size={22} /></TaskApp>
        <Running><Chrome /></Running>
        <Running><Paint /></Running>
        <Tray>
          <svg width="37" height="16" viewBox="0 0 37 16" fill="none" stroke="#fff" strokeWidth="1.200"><circle cx="10" cy="3.500" r="2.800" /><circle cx="4.500" cy="8.500" r="2.400" /><path d="M.5 15.500q0-4 4-4.200 4 .2 4 4.200M8 8q5-2.500 6 3.500" /></svg>
          <svg width="22" height="8" fill="none" stroke="#fff" strokeWidth="1.200"><path d="M.8 7L6 1.200 11.200 7" /></svg>
          <svg width="24" height="15" fill="none" stroke="#fff"><path d="M4.500 2.500h15v8h-15M8 13.500h8M12 11v2.500M.5 1.500h4v4h-4zM2.500 5.500v7" /></svg>
          <svg width="18" height="15" fill="none" stroke="#fff"><path d="M.5 5h2L6.500 1.500v12L2.500 10h-2zM9 5.500q1.500 2 0 4M11.500 3.500q3 4 0 8M13.500 1.500q4.500 6 0 12" /></svg>
          <Clock $ls={-0.3}>5:22 PM<br />4/16/2019</Clock>
          <svg width="16" height="16" fill="none" stroke="#fff"><path d="M.5.5h15v11.500h-4.500L8 15l-3-3H.5z" /></svg>
        </Tray>
      </Taskbar>
    </Screen>
  );
}
